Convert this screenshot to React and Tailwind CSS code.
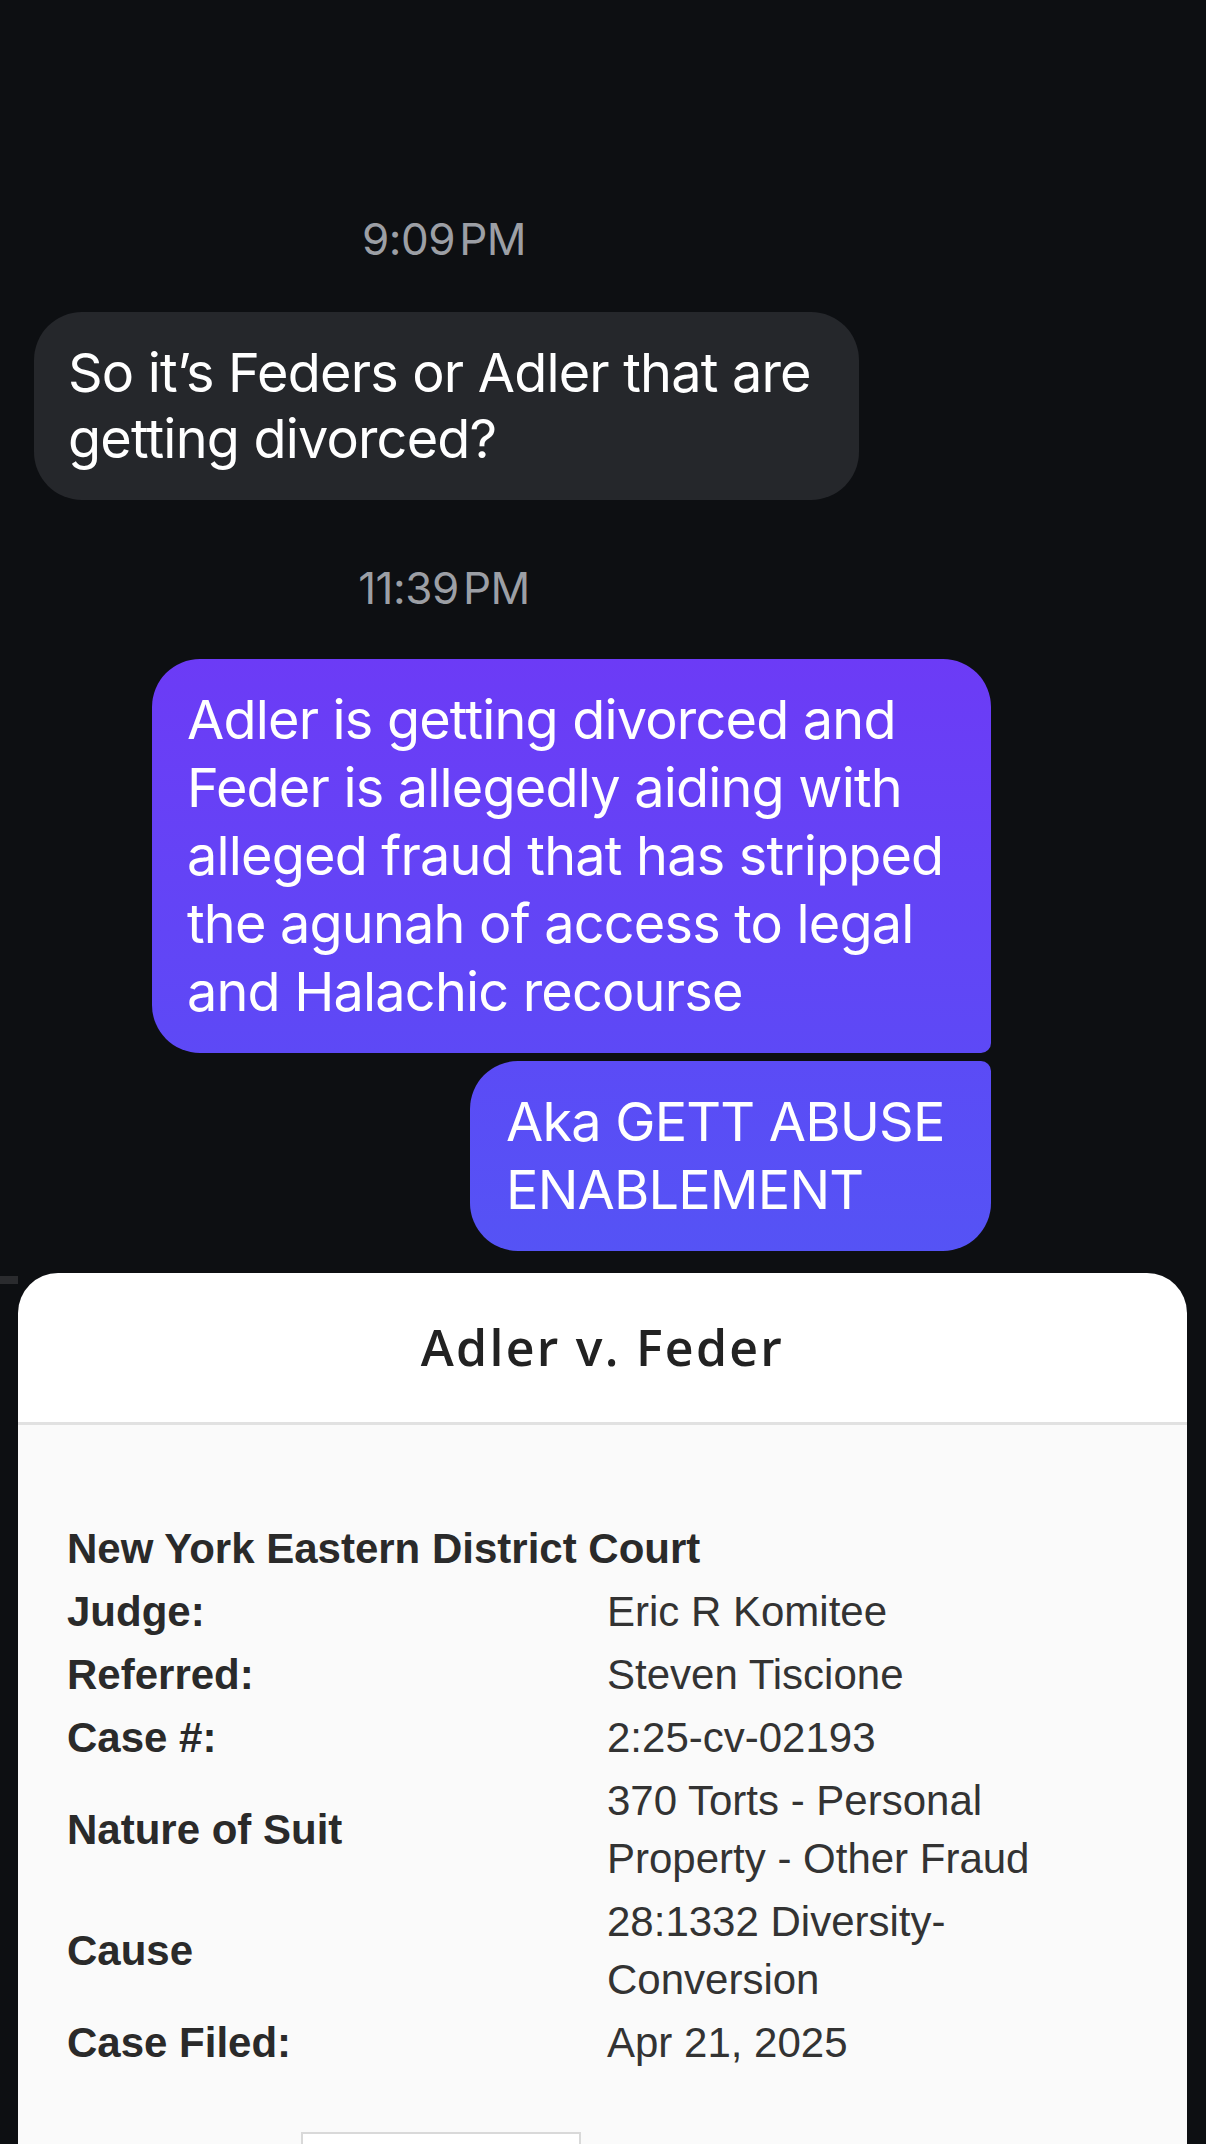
export default function App() {
  const rows = [
    { label: 'Judge:', value: ['Eric R Komitee'] },
    { label: 'Referred:', value: ['Steven Tiscione'] },
    { label: 'Case #:', value: ['2:25-cv-02193'] },
    { label: 'Nature of Suit', value: ['370 Torts - Personal', 'Property - Other Fraud'] },
    { label: 'Cause', value: ['28:1332 Diversity-', 'Conversion'] },
    { label: 'Case Filed:', value: ['Apr 21, 2025'] },
  ];

  const msgFont = { fontFamily: 'Inter, "Liberation Sans", sans-serif' };
  const docFont = { fontFamily: '"Liberation Sans", Arial, sans-serif' };

  return (
    <div className="w-[1206px] h-[2144px] overflow-hidden bg-[#0d0f12] flex flex-col pt-[214px]" style={msgFont}>
      {/* first timestamp */}
      <div className="w-[888px] text-center text-[44px] leading-[50px] text-[#9c9fa5] tracking-[-0.01em]">
        9:09<span className="ml-[4px]">PM</span>
      </div>

      {/* incoming */}
      <div className="mt-[48px] ml-[34px] w-[825px] rounded-[48px] bg-[#25272b] pl-[34px] py-[28px] text-white text-[54px] leading-[66px] tracking-[-0.015em]">
        So it’s Feders or Adler that are
        <br />
        getting divorced?
      </div>

      {/* second timestamp */}
      <div className="mt-[63px] w-[888px] text-center text-[44px] leading-[50px] text-[#9c9fa5] tracking-[-0.01em]">
        11:39<span className="ml-[4px]">PM</span>
      </div>

      {/* outgoing */}
      <div className="mt-[46px] ml-[152px] w-[839px] rounded-[48px] rounded-br-[10px] bg-gradient-to-b from-[#6c3bf6] to-[#5d49f6] pl-[35px] py-[27px] text-white text-[54px] leading-[68px] tracking-[-0.015em]">
        Adler is getting divorced and
        <br />
        Feder is allegedly aiding with
        <br />
        alleged fraud that has stripped
        <br />
        the agunah of access to legal
        <br />
        and Halachic recourse
      </div>
      <div className="mt-[8px] ml-[470px] w-[521px] rounded-[48px] rounded-tr-[10px] bg-gradient-to-b from-[#5b4bf6] to-[#5553f5] pl-[36px] py-[27px] text-white text-[54px] leading-[68px] tracking-[-0.015em]">
        Aka GETT ABUSE
        <br />
        ENABLEMENT
      </div>

      {/* shared case card */}
      <div className="mt-[22px] flex items-start">
        <div className="w-[18px] h-[8px] mt-[3px] bg-[#2a2b2e]" />
        <div className="w-[1169px] h-[900px] rounded-t-[40px] bg-white overflow-hidden" style={docFont}>
          <div className="h-[152px] flex items-center justify-center border-b-[3px] border-[#e1e1e1]">
            <div className="text-[50px] font-semibold text-[#222] tracking-[0.045em]" style={{ fontFamily: '"Open Sans", sans-serif' }}>
              Adler v. Feder
            </div>
          </div>
          <div className="bg-[#fafafa] h-full pt-[95px] pl-[49px]">
            <div className="flex flex-col gap-[5px] text-[42px] text-[#2a2a2a]">
              <div className="leading-[58px] font-bold">New York Eastern District Court</div>
              {rows.map((r) => (
                <div key={r.label} className="flex items-center">
                  <div className="w-[540px] font-bold leading-[58px]">{r.label}</div>
                  <div className="leading-[58px] text-[#333]">
                    {r.value.map((v) => (
                      <div key={v}>{v}</div>
                    ))}
                  </div>
                </div>
              ))}
            </div>
            <div className="mt-[60px] ml-[234px] w-[280px] h-[80px] border-2 border-b-0 border-[#d9d9d9] bg-white" />
          </div>
        </div>
      </div>
    </div>
  );
}
